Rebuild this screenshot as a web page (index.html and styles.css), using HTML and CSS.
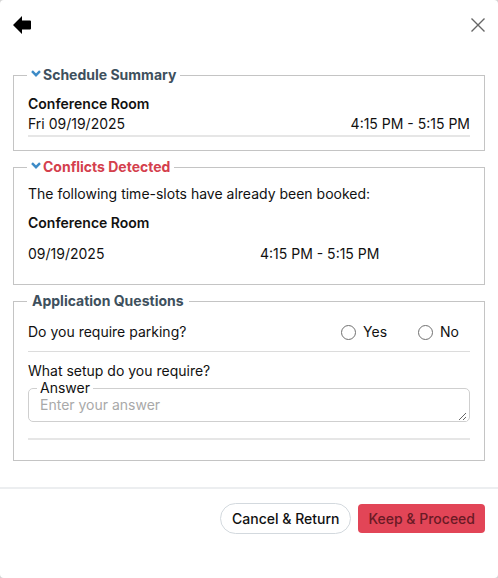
FILE: index.html
```html
<!DOCTYPE html>
<html>
<head>
<meta charset="utf-8">
<link rel="stylesheet" href="styles.css">
</head>
<body>
<div class="modal">
  <header class="modal-header">
    <button class="icon-btn" aria-label="Back">
      <svg width="20" height="20" viewBox="12 15 20 20"><path d="M13 25 L22 16 L22 20.5 L30 20.5 Q31 20.5 31 21.5 L31 28.5 Q31 29.5 30 29.5 L22 29.5 L22 34 Z" fill="#000"/></svg>
    </button>
    <button class="icon-btn" aria-label="Close">
      <svg width="16" height="16" viewBox="0 0 16 16"><path d="M1.5 1.5 L14.5 14.5 M14.5 1.5 L1.5 14.5" stroke="#666" stroke-width="1.4" fill="none"/></svg>
    </button>
  </header>
  <div class="modal-body">
    <fieldset class="panel">
      <legend class="panel-title"><svg class="chev" width="10" height="7" viewBox="0 0 10 7"><path d="M1 1.2 L5 5.2 L9 1.2" stroke="#3d8bc7" stroke-width="2.4" fill="none"/></svg>Schedule Summary</legend>
      <div class="room">Conference Room</div>
      <div class="summary-row"><span>Fri 09/19/2025</span><span>4:15 PM - 5:15 PM</span></div>
    </fieldset>
    <fieldset class="panel conflicts">
      <legend class="panel-title danger"><svg class="chev" width="10" height="7" viewBox="0 0 10 7"><path d="M1 1.2 L5 5.2 L9 1.2" stroke="#3d8bc7" stroke-width="2.4" fill="none"/></svg>Conflicts Detected</legend>
      <p class="intro">The following time-slots have already been booked:</p>
      <div class="room conflict-room">Conference Room</div>
      <div class="conflict-row"><span>09/19/2025</span><span>4:15 PM - 5:15 PM</span></div>
    </fieldset>
    <fieldset class="panel questions">
      <legend class="panel-title plain">Application Questions</legend>
      <div class="question-row">
        <span>Do you require parking?</span>
        <div class="options">
          <label class="option"><input type="radio" name="parking"><span>Yes</span></label>
          <label class="option"><input type="radio" name="parking"><span>No</span></label>
        </div>
      </div>
      <div class="question-block">
        <div class="question-label">What setup do you require?</div>
        <fieldset class="answer">
          <legend>Answer</legend>
          <textarea placeholder="Enter your answer"></textarea>
        </fieldset>
      </div>
    </fieldset>
  </div>
  <footer class="modal-footer">
    <button class="btn btn-outline">Cancel &amp; Return</button>
    <button class="btn btn-danger">Keep &amp; Proceed</button>
  </footer>
</div>
</body>
</html>
```

FILE: styles.css
```css
* { box-sizing: border-box; }
html, body { margin: 0; padding: 0; }
body {
  background: #d4d4d4;
  font-family: Inter, "Noto Sans", sans-serif;
  font-size: 14px;
  line-height: 20px;
  color: #111;
}
.modal {
  width: 498px;
  height: 578px;
  background: #fff;
  border-radius: 4px;
  display: flex;
  flex-direction: column;
}
.modal-header {
  height: 65px;
  display: flex;
  justify-content: space-between;
  align-items: flex-start;
  padding: 15px 12px 0 12px;
}
.icon-btn {
  border: 0;
  background: none;
  padding: 0;
  margin: 0;
  display: flex;
  cursor: pointer;
}
.icon-btn:last-child { margin-top: 2px; }
.modal-body {
  padding: 0 13px 26px 13px;
  display: flex;
  flex-direction: column;
  gap: 6px;
  border-bottom: 2px solid #eceef0;
}
.panel {
  margin: 0;
  border: 1px solid #c4c4c4;
  padding: 9px 14px 13px 14px;
  min-width: 0;
}
.panel-title {
  padding: 0 4px;
  margin-left: -1px;
  font-weight: 700;
  color: #3e505d;
  line-height: 20px;
  display: flex;
  align-items: center;
}
.panel-title .chev { margin-right: 2px; margin-top: -3px; }
.panel-title.danger { color: #d4404d; }
.panel-title.plain { padding: 0 5px; }
.room { font-weight: 600; }
.summary-row {
  display: flex;
  justify-content: space-between;
  padding-bottom: 1px;
  border-bottom: 2px solid #e6e6e6;
}
.conflicts { padding: 7px 14px 20px 14px; }
.intro { margin: 0; }
.conflict-room { margin-top: 9px; }
.conflict-row {
  margin-top: 11px;
  display: grid;
  grid-template-columns: 232px 1fr;
}
.questions { padding: 11px 14px 20px 14px; }
.question-row {
  display: flex;
  justify-content: space-between;
  align-items: center;
  padding-bottom: 9px;
  border-bottom: 1px solid #dcdcdc;
}
.options {
  display: flex;
  gap: 31px;
  padding-right: 11px;
}
.option {
  display: flex;
  align-items: center;
  gap: 7px;
}
.option input {
  appearance: none;
  -webkit-appearance: none;
  width: 15px;
  height: 15px;
  margin: 0;
  border: 1.5px solid #707070;
  border-radius: 50%;
}
.question-block {
  padding-top: 9px;
  padding-bottom: 16px;
  border-bottom: 2px solid #e6e6e6;
}
.answer {
  margin: 0;
  border: 1px solid #cfcfcf;
  border-radius: 5px;
  padding: 0 2px 0 11px;
  min-width: 0;
}
.answer legend {
  padding: 0 3px;
  margin-left: -3px;
  line-height: 14px;
  font-size: 14px;
  color: #111;
}
.answer textarea {
  display: block;
  width: 100%;
  height: 26px;
  border: 0;
  outline: none;
  padding: 0;
  margin: 0;
  font-family: inherit;
  font-size: 14px;
  line-height: 20px;
  color: #111;
  resize: vertical;
}
.answer textarea::placeholder { color: #a9a9a9; }
.modal-footer {
  display: flex;
  justify-content: flex-end;
  align-items: flex-start;
  gap: 7px;
  padding: 14px 13px 0 0;
}
.btn {
  font-family: inherit;
  font-size: 14px;
  font-weight: 500;
  cursor: pointer;
}
.btn-outline {
  height: 31px;
  padding: 0 11px;
  background: #fff;
  color: #111;
  border: 1.5px solid #d3d9de;
  border-radius: 16px;
}
.btn-danger {
  margin-top: 1px;
  height: 29px;
  padding: 0 10px;
  background: #e24557;
  color: #6a1a25;
  border: 0;
  border-radius: 4px;
}
```
